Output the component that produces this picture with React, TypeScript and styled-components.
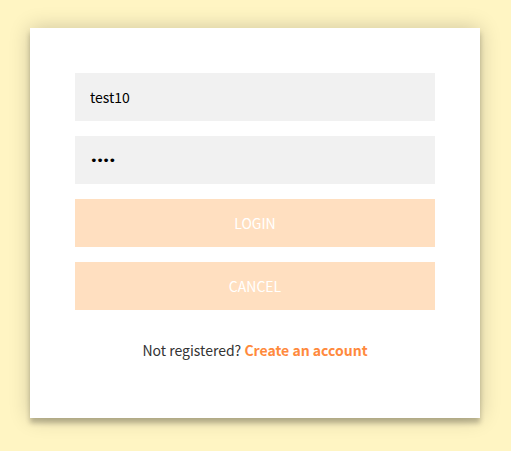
import React from 'react'
import styled, { createGlobalStyle } from 'styled-components'

const GlobalStyle = createGlobalStyle`
  html, body {
    margin: 0;
    padding: 0;
    background: #fff5c3;
    font-family: "Noto Sans CJK KR", "Noto Sans", sans-serif;
  }
  * { box-sizing: border-box; }
`

const Page = styled.div`
  width: 511px;
  height: 451px;
  padding: 28px 0 0 30px;
  display: flex;
  align-items: flex-start;
`

const Form = styled.form`
  width: 450px;
  height: 390px;
  background: #ffffff;
  padding: 45px;
  text-align: center;
  box-shadow: 0 0 20px rgba(0, 0, 0, 0.2), 0 5px 5px rgba(0, 0, 0, 0.24);
`

const Input = styled.input<{ $secret?: boolean }>`
  display: block;
  width: 100%;
  height: 48px;
  margin: 0 0 15px;
  padding: 0 15px;
  border: 0;
  outline: 0;
  background: #f1f1f1;
  font-family: ${p => (p.$secret ? '"DejaVu Sans", sans-serif' : 'inherit')};
  font-size: ${p => (p.$secret ? '13px' : '14px')};
  letter-spacing: ${p => (p.$secret ? '-1.5px' : 'normal')};
  color: #000;
`

const Button = styled.button`
  display: block;
  width: 100%;
  height: 48px;
  margin: 0 0 15px;
  border: 0;
  outline: 0;
  background: #ffdfc0;
  color: #ffffff;
  font-family: inherit;
  font-size: 14px;
  text-transform: uppercase;
`

const Message = styled.p`
  margin: 30px 0 0;
  font-size: 14px;
  color: #333;
`

const Link = styled.a`
  color: #ff8a3d;
  font-weight: bold;
  text-decoration: none;
`

export default function App() {
  return (
    <>
      <GlobalStyle />
      <Page>
        <Form onSubmit={e => e.preventDefault()}>
          <Input type="text" defaultValue="test10" />
          <Input type="password" defaultValue="1234" $secret />
          <Button type="button">login</Button>
          <Button type="button">cancel</Button>
          <Message>
            Not registered? <Link href="#">Create an account</Link>
          </Message>
        </Form>
      </Page>
    </>
  )
}
